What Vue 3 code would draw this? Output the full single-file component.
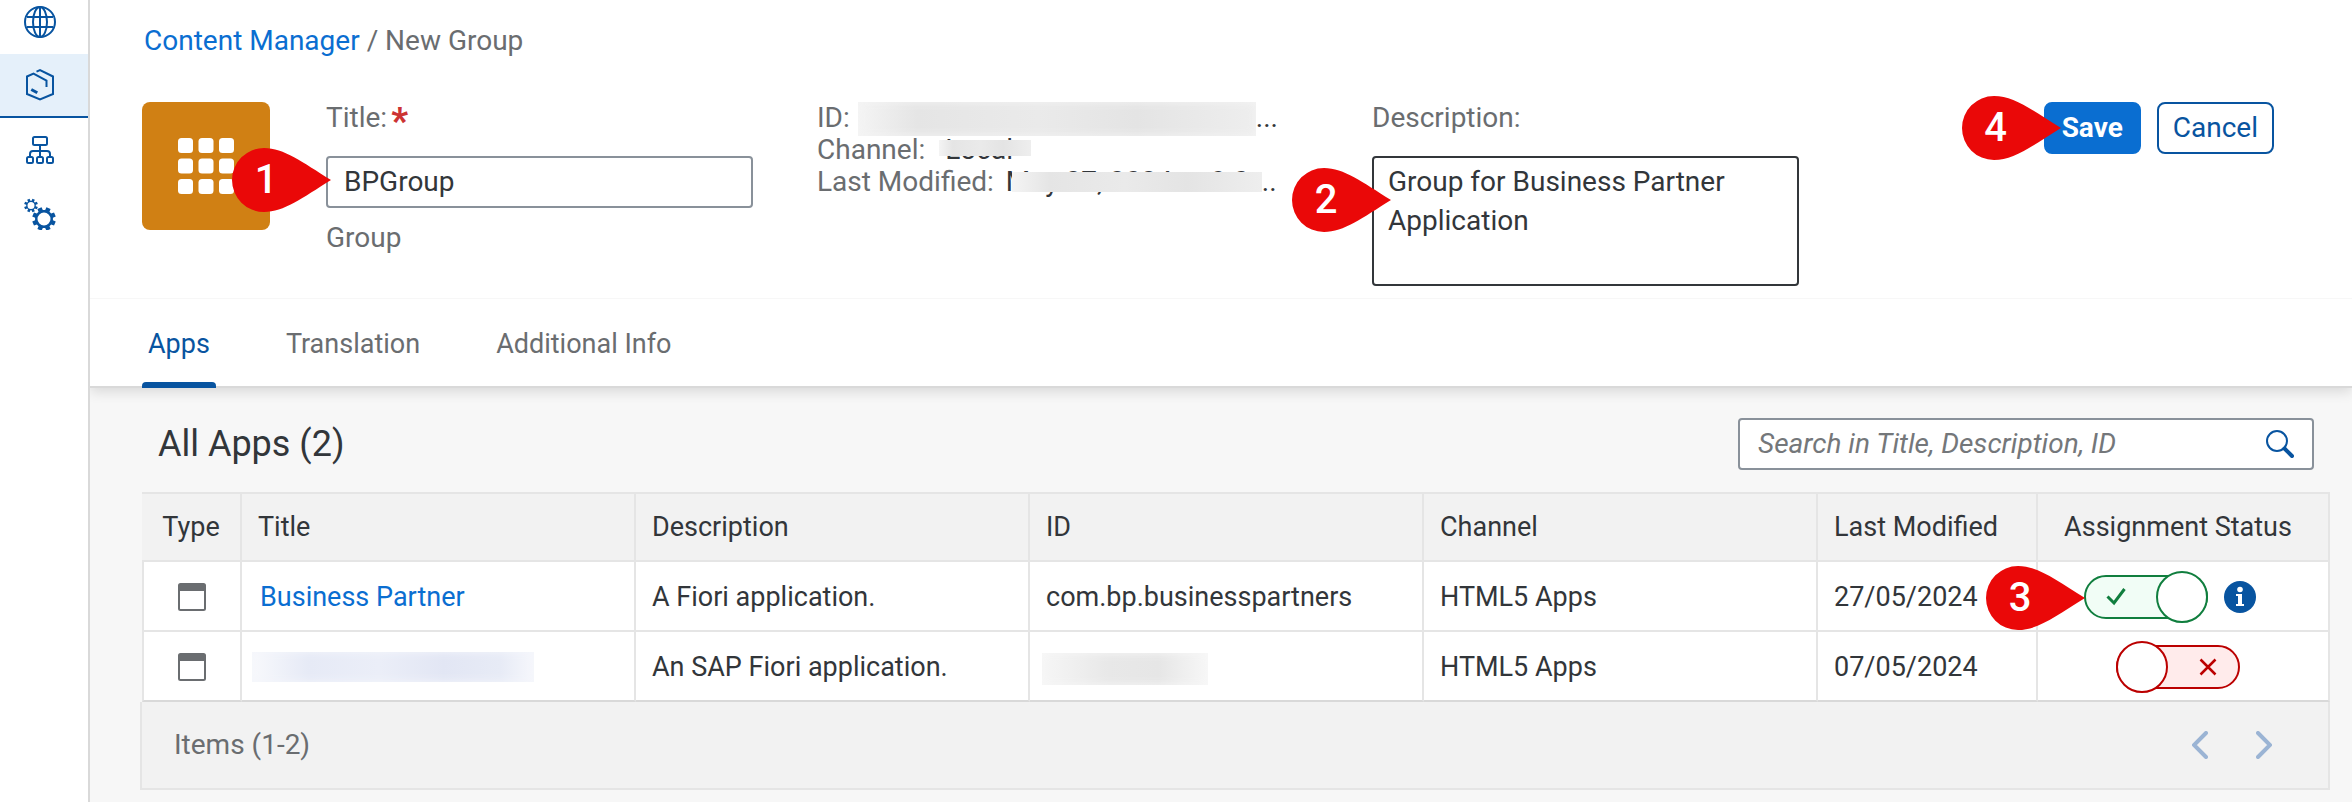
<script setup>
import { ref } from 'vue'

const title = ref('BPGroup')
const description = ref('Group for Business Partner Application')
const search = ref('')
const activeTab = ref('Apps')
const tabs = ['Apps', 'Translation', 'Additional Info']

const apps = ref([
  {
    title: 'Business Partner',
    description: 'A Fiori application.',
    id: 'com.bp.businesspartners',
    channel: 'HTML5 Apps',
    modified: '27/05/2024',
    assigned: true
  },
  {
    title: '',
    description: 'An SAP Fiori application.',
    id: '',
    channel: 'HTML5 Apps',
    modified: '07/05/2024',
    assigned: false
  }
])

// Outline of a gear with eight teeth, centred on cx, cy
function gear(cx, cy, inner, outer) {
  const points = []
  for (let i = 0; i < 8; i++) {
    const mid = (i * Math.PI) / 4 + Math.PI / 8
    const corners = [[-0.26, inner], [-0.19, outer], [0.19, outer], [0.26, inner]]
    for (const [turn, r] of corners) {
      points.push(`${(cx + r * Math.cos(mid + turn)).toFixed(2)} ${(cy + r * Math.sin(mid + turn)).toFixed(2)}`)
    }
  }
  return `M${points.join('L')}Z`
}
const smallGear = gear(7, 7.5, 4.8, 7)
const largeGear = gear(20, 21, 9, 12)
</script>

<template>
  <div class="shell">
    <nav class="side" aria-label="Main">
      <a href="#sites" class="side-item first" aria-label="Sites">
        <svg viewBox="0 0 32 32" fill="none" stroke="currentColor" stroke-width="2">
          <circle cx="16" cy="16" r="15" />
          <ellipse cx="16" cy="16" rx="7" ry="15" />
          <path d="M16 1v30M3 11h26M3 21h26" />
        </svg>
      </a>
      <a href="#content" class="side-item selected" aria-label="Content Manager">
        <svg viewBox="0 0 32 32" fill="none" stroke="currentColor" stroke-width="2">
          <path d="M12.500 2.700L16 1.200L29 7.500V25L16 30.500L3 25V7.500L9.500 4.700L22.500 11.500V18" />
          <path d="M7.300 20.500l6 3.300" stroke-width="3" />
        </svg>
      </a>
      <a href="#channels" class="side-item" aria-label="Channel Manager">
        <svg viewBox="0 0 32 32" fill="none" stroke="currentColor" stroke-width="2">
          <rect x="9" y="3" width="14" height="8" rx="1.500" />
          <path d="M16 11v12M6 23v-3q0-3 3-3h14q3 0 3 3v3" />
          <rect x="3" y="23" width="6" height="6" rx="1.500" />
          <rect x="13" y="23" width="6" height="6" rx="1.500" />
          <rect x="23" y="23" width="6" height="6" rx="1.500" />
        </svg>
      </a>
      <a href="#settings" class="side-item" aria-label="Settings">
        <svg viewBox="0 0 32 32" fill="currentColor" fill-rule="evenodd">
          <path :d="smallGear + 'M7 4a3.500 3.500 0 1 0 0 7a3.500 3.500 0 1 0 0-7Z'" />
          <path :d="largeGear + 'M20 14.500a6.500 6.500 0 1 0 0 13a6.500 6.500 0 1 0 0-13Z'" />
        </svg>
      </a>
    </nav>

    <main class="page">
      <header class="head">
        <div class="crumbs"><a href="#content">Content Manager</a> <span>/ New Group</span></div>
        <div class="form">
          <div class="tile">
            <svg viewBox="0 0 56 56" fill="#fff">
              <template v-for="r in 3">
                <rect v-for="c in 3" :key="r + '-' + c" :x="(c - 1) * 20.500" :y="(r - 1) * 20.500" width="15" height="15" rx="3.500" />
              </template>
            </svg>
          </div>

          <div class="field">
            <label for="group-title">Title:<span class="star">*</span></label>
            <div class="anchor">
              <input id="group-title" v-model="title" type="text" class="box" />
              <div class="pin pin-title"><svg viewBox="0 0 99 64"><path d="M32 0C52 0 70 14 99 32C70 50 52 64 32 64A32 32 0 0 1 32 0Z" /></svg><b>1</b></div>
            </div>
            <p class="kind">Group</p>
          </div>

          <div class="meta">
            <p><span class="key">ID:</span><i class="mask mask-id"></i>...</p>
            <p><span class="key">Channel:</span><span class="covered local">Local<i class="mask mask-channel"></i></span></p>
            <p><span class="key">Last Modified:</span><span class="covered date">May 27, 2024 at 9:0<i class="mask mask-date"></i></span>..</p>
          </div>

          <div class="field">
            <label for="group-description">Description:</label>
            <div class="anchor">
              <textarea id="group-description" v-model="description" class="box area"></textarea>
              <div class="pin pin-description"><svg viewBox="0 0 99 64"><path d="M32 0C52 0 70 14 99 32C70 50 52 64 32 64A32 32 0 0 1 32 0Z" /></svg><b>2</b></div>
            </div>
          </div>

          <div class="actions">
            <div class="anchor">
              <button type="button" class="btn primary">Save</button>
              <div class="pin pin-save"><svg viewBox="0 0 99 64"><path d="M32 0C52 0 70 14 99 32C70 50 52 64 32 64A32 32 0 0 1 32 0Z" /></svg><b>4</b></div>
            </div>
            <button type="button" class="btn">Cancel</button>
          </div>
        </div>
        <div class="tabs" role="tablist">
          <button
            v-for="tab in tabs"
            :key="tab"
            type="button"
            role="tab"
            :aria-selected="activeTab === tab"
            class="tab"
            :class="{ active: activeTab === tab }"
            @click="activeTab = tab"
          >{{ tab }}</button>
        </div>
      </header>

      <section class="content">
        <div class="toolbar">
          <h2>All Apps (2)</h2>
          <form class="search" role="search" @submit.prevent>
            <input v-model="search" type="text" aria-label="Search apps" placeholder="Search in Title, Description, ID" />
            <button type="submit" aria-label="Search">
              <svg viewBox="0 0 28 28" fill="none" stroke="currentColor">
                <circle cx="11" cy="11" r="10" stroke-width="2" />
                <path d="M18.500 18.500L26 26" stroke-width="4" stroke-linecap="round" />
              </svg>
            </button>
          </form>
        </div>

        <table>
          <colgroup>
            <col class="c-type" /><col /><col /><col /><col /><col class="c-date" /><col class="c-status" />
          </colgroup>
          <thead>
            <tr>
              <th class="center">Type</th>
              <th>Title</th>
              <th>Description</th>
              <th>ID</th>
              <th>Channel</th>
              <th>Last Modified</th>
              <th class="status">Assignment Status</th>
            </tr>
          </thead>
          <tbody>
            <tr v-for="(app, i) in apps" :key="i">
              <td class="center">
                <svg class="window" viewBox="0 0 28 28">
                  <rect x="1" y="1" width="26" height="26" rx="1.500" fill="none" stroke="#6a6d70" stroke-width="2" />
                  <path d="M1 1h26v7H1z" fill="#6a6d70" />
                </svg>
              </td>
              <td class="name">
                <a v-if="app.title" href="#app">{{ app.title }}</a>
                <i v-else class="mask mask-name"></i>
              </td>
              <td>{{ app.description }}</td>
              <td>
                <template v-if="app.id">{{ app.id }}</template>
                <i v-else class="mask mask-app"></i>
              </td>
              <td>{{ app.channel }}</td>
              <td>{{ app.modified }}</td>
              <td class="status">
                <div class="status-row">
                  <label class="switch" :class="{ on: app.assigned }">
                    <input v-model="app.assigned" type="checkbox" role="switch" :aria-label="'Assign app ' + (i + 1)" />
                    <svg v-if="app.assigned" class="mark" viewBox="0 0 20 20" fill="none" stroke="currentColor" stroke-width="3"><path d="M1.500 9.500L8 16L18.500 2" /></svg>
                    <svg v-else class="mark" viewBox="0 0 20 20" fill="none" stroke="currentColor" stroke-width="2.500"><path d="M2.500 2.500l15 15M17.500 2.500l-15 15" /></svg>
                    <span class="knob"></span>
                  </label>
                  <svg v-if="i === 0" class="info" viewBox="0 0 32 32">
                    <circle cx="16" cy="16" r="16" fill="#0854a0" />
                    <circle cx="16" cy="8.500" r="2.800" fill="#fff" />
                    <path d="M12 13h6v10h2v2h-8v-2h2v-8h-2z" fill="#fff" />
                  </svg>
                  <div v-if="i === 0" class="pin pin-switch"><svg viewBox="0 0 99 64"><path d="M32 0C52 0 70 14 99 32C70 50 52 64 32 64A32 32 0 0 1 32 0Z" /></svg><b>3</b></div>
                </div>
              </td>
            </tr>
          </tbody>
        </table>
        <div class="pager">
          <span>Items (1-2)</span>
          <div class="pages">
            <button type="button" disabled aria-label="Previous page">
              <svg viewBox="0 0 16 28"><path d="M14 2L2 14l12 12" /></svg>
            </button>
            <button type="button" disabled aria-label="Next page">
              <svg viewBox="0 0 16 28"><path d="M2 2l12 12L2 26" /></svg>
            </button>
          </div>
        </div>
      </section>
    </main>
  </div>
</template>

<style>
body {
  margin: 0;
  background: #f7f7f7;
}
</style>

<style scoped>
.shell {
  display: flex;
  min-height: 100vh;
  font-family: Roboto, "Liberation Sans", sans-serif;
  font-size: 28px;
  line-height: 32px;
  color: #32363a;
}
.shell *,
.shell *::before {
  box-sizing: border-box;
}
button,
input,
textarea {
  font: inherit;
  color: inherit;
  margin: 0;
}
a {
  color: #0a6ed1;
  text-decoration: none;
}
p,
h2 {
  margin: 0;
}

/* Side navigation */
.side {
  flex: none;
  width: 90px;
  background: #fff;
  border-right: 2px solid #d9d9d9;
}
.side-item {
  display: flex;
  align-items: center;
  height: 64px;
  padding-left: 24px;
  color: #0854a0;
}
.side-item.first {
  height: 54px;
  padding-bottom: 10px;
}
.side-item.selected {
  background: #e5f0fa;
  border-bottom: 2px solid #0854a0;
}
.side-item svg {
  width: 32px;
  height: 32px;
}

/* Header */
.page {
  flex: 1;
  min-width: 0;
}
.head {
  position: relative;
  background: #fff;
  border-bottom: 2px solid #d9d9d9;
  box-shadow: 0 4px 12px rgba(0, 0, 0, 0.12);
  clip-path: inset(0 0 -20px 0);
}
.crumbs {
  padding: 25px 54px 0;
  color: #6a6d70;
}
.form {
  display: grid;
  grid-template-columns: 128px 427fr 507fr 427fr 419fr;
  column-gap: 56px;
  align-items: start;
  padding: 45px 78px 12px 52px;
  border-bottom: 1px solid #f7f7f7;
}
.tile {
  display: grid;
  place-items: center;
  height: 128px;
  background: #d08014;
  border-radius: 8px;
}
.tile svg {
  width: 56px;
  height: 56px;
}
.field label {
  display: block;
  color: #6a6d70;
}
.star {
  margin-left: 4px;
  color: #cc3333;
  font-weight: 900;
  font-size: 36px;
  line-height: 20px;
  vertical-align: -6px;
}
.field .anchor {
  margin-top: 22px;
}
.anchor {
  position: relative;
}
.box {
  display: block;
  width: 100%;
  height: 52px;
  padding: 0 16px 2px;
  background: #fff;
  border: 2px solid #89919a;
  border-radius: 4px;
  outline: none;
}
.area {
  height: 130px;
  padding: 4px 14px;
  line-height: 39px;
  border-color: #32363a;
  resize: none;
  overflow: hidden;
}
.kind {
  margin-top: 14px;
  color: #6a6d70;
}
.meta {
  padding-left: 8px;
  white-space: nowrap;
}
.meta p {
  display: flex;
}
.key {
  color: #6a6d70;
}
.covered {
  position: relative;
}
.local {
  margin-left: 20px;
}
.date {
  width: 256px;
  margin-left: 12px;
}
.mask {
  display: block;
  background: linear-gradient(90deg, #f4f4f4, #e5e5e5 15%, #eaeaea 45%, #e4e4e4 70%, #eeeeee);
}
.mask-id {
  width: 398px;
  height: 34px;
  margin: 0 0 -2px 8px;
  box-shadow: inset 0 0 10px #f4f4f4;
}
.mask-channel {
  position: absolute;
  left: -6px;
  top: 6px;
  width: 92px;
  height: 16px;
}
.mask-date {
  position: absolute;
  left: 6px;
  right: 0;
  top: 6px;
  height: 20px;
}
.mask-name {
  width: 282px;
  height: 30px;
  margin-left: -8px;
  background: linear-gradient(90deg, #f8f9fc, #e6eaf6 20%, #ebeef8 45%, #e2e6f4 68%, #e7ebf6 88%, #f6f7fc);
  box-shadow: inset 0 0 10px #f4f6fb;
}
.mask-app {
  width: 166px;
  height: 32px;
  margin: 4px 0 0 -4px;
  background: linear-gradient(90deg, #f6f6f6, #e8e8e8 40%, #e6e6e6 70%, #f7f7f7);
  box-shadow: inset 0 0 10px #f7f7f7;
}
.actions {
  display: flex;
  justify-content: flex-end;
  gap: 16px;
}
.btn {
  display: block;
  height: 52px;
  padding: 0 14px;
  background: #fff;
  border: 2px solid #0854a0;
  border-radius: 8px;
  color: #0854a0;
}
.primary {
  padding: 0 16px;
  background: #0a6ed1;
  border-color: #0a6ed1;
  color: #fff;
  font-weight: 700;
}

/* Numbered callouts */
.pin {
  position: absolute;
  z-index: 2;
  width: 99px;
  height: 64px;
}
.pin svg {
  display: block;
  width: 99px;
  height: 64px;
  fill: #ea0808;
}
.pin b {
  position: absolute;
  top: 0;
  left: 0;
  width: 68px;
  line-height: 64px;
  font-size: 40px;
  font-weight: 500;
  color: #fff;
  text-align: center;
}
.pin-title {
  left: -94px;
  top: -8px;
}
.pin-description {
  left: -80px;
  top: 12px;
}
.pin-save {
  left: -82px;
  top: -6px;
}
.pin-switch {
  left: -98px;
  top: -5px;
}

/* Tabs */
.tabs {
  display: flex;
  gap: 64px;
  padding-left: 52px;
  font-size: 27px;
}
.tab {
  position: relative;
  height: 87px;
  padding: 2px 6px 0;
  background: none;
  border: 0;
  color: #6a6d70;
}
.tab.active {
  color: #0854a0;
}
.tab.active::before {
  content: "";
  position: absolute;
  left: 0;
  right: 0;
  bottom: -2px;
  height: 6px;
  background: #0854a0;
  border-radius: 4px 4px 0 0;
}

/* Content */
.content {
  padding: 30px 22px 12px 52px;
}
.toolbar {
  display: flex;
  align-items: center;
  justify-content: space-between;
  padding: 0 16px 22px;
}
h2 {
  font-size: 36px;
  font-weight: 400;
  line-height: 44px;
}
.search {
  display: flex;
  align-items: center;
  width: 576px;
  height: 52px;
  padding: 0 18px;
  background: #fff;
  border: 2px solid #89919a;
  border-radius: 4px;
}
.search input {
  flex: 1;
  min-width: 0;
  padding: 0;
  background: none;
  border: 0;
  outline: none;
}
.search input::placeholder {
  color: #74777a;
  font-style: italic;
  opacity: 1;
}
.search button {
  padding: 0;
  background: none;
  border: 0;
  color: #0854a0;
}
.search svg {
  display: block;
  width: 28px;
  height: 28px;
}
table {
  width: 100%;
  table-layout: fixed;
  border-collapse: separate;
  border-spacing: 0;
  font-size: 27px;
}
.c-type {
  width: 100px;
}
.c-date {
  width: 220px;
}
.c-status {
  width: 292px;
}
th,
td {
  height: 70px;
  padding: 0 0 0 16px;
  border: solid #e5e5e5;
  border-width: 0 2px 2px 0;
  text-align: left;
  font-weight: 400;
  white-space: nowrap;
}
th {
  border-top-width: 2px;
  background: #f2f2f2;
}
td {
  padding-top: 2px;
  background: #fff;
}
td:first-child {
  border-left-width: 2px;
}
tbody tr:last-child td {
  border-bottom-color: #d9d9d9;
}
.center {
  padding-left: 0;
  text-align: center;
}
.name {
  padding-left: 18px;
}
.status {
  padding-left: 0;
  padding-right: 10px;
  text-align: center;
}
.window {
  display: block;
  width: 28px;
  height: 28px;
  margin: 0 auto;
}
.status-row {
  position: relative;
  display: flex;
  align-items: center;
  gap: 16px;
  width: max-content;
  margin: 0 auto;
}
.switch {
  position: relative;
  display: block;
  width: 124px;
  height: 52px;
  color: #bb0000;
}
.switch.on {
  color: #107e3e;
}
.switch input {
  display: block;
  width: 124px;
  height: 44px;
  margin-top: 4px;
  appearance: none;
  background: #ffebeb;
  border: 2px solid currentColor;
  border-radius: 22px;
}
.switch.on input {
  background: #f1fdf6;
}
.knob {
  position: absolute;
  left: 0;
  top: 0;
  width: 52px;
  height: 52px;
  background: #fff;
  border: 2px solid currentColor;
  border-radius: 50%;
}
.switch.on .knob {
  left: auto;
  right: 0;
}
.mark {
  position: absolute;
  top: 16px;
  right: 22px;
  width: 20px;
  height: 20px;
}
.switch.on .mark {
  right: auto;
  left: 22px;
}
.info {
  width: 32px;
  height: 32px;
  margin-right: 16px;
}
.pager {
  display: flex;
  align-items: center;
  justify-content: space-between;
  height: 88px;
  margin-left: -2px;
  padding: 0 56px 0 32px;
  background: #f2f2f2;
  border: solid #e5e5e5;
  border-width: 0 2px 2px;
  color: #6a6d70;
}
.pages {
  display: flex;
  gap: 48px;
}
.pages button {
  padding: 0;
  background: none;
  border: 0;
}
.pages svg {
  display: block;
  width: 16px;
  height: 28px;
  fill: none;
  stroke: #9bb4d4;
  stroke-width: 4;
  stroke-linecap: round;
}
</style>
